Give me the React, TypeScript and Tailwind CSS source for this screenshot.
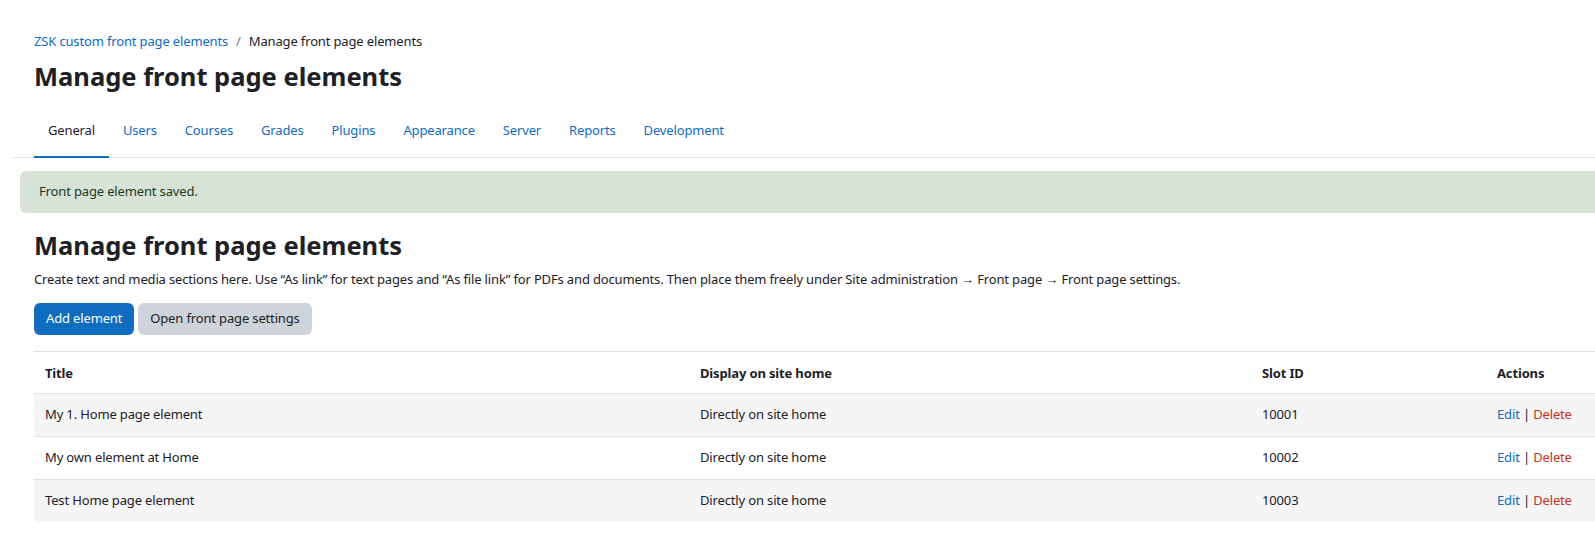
import React from 'react';

const tabs = ['General', 'Users', 'Courses', 'Grades', 'Plugins', 'Appearance', 'Server', 'Reports', 'Development'];

const rows = [
  { title: 'My 1. Home page element', display: 'Directly on site home', slot: '10001' },
  { title: 'My own element at Home', display: 'Directly on site home', slot: '10002' },
  { title: 'Test Home page element', display: 'Directly on site home', slot: '10003' },
];

const cols = 'grid grid-cols-[655px_562px_235px_1fr]';

export default function App() {
  return (
    <div className="h-[559px] w-full overflow-hidden bg-white text-[#1d2125] font-['Noto_Sans',sans-serif] text-[13px] tracking-[-0.15px]">
      <div className="w-[1640px]">
        <nav className="pl-[34px] pt-[31px] flex items-center leading-[20px]">
          <a className="text-[#0f6cbf]">ZSK custom front page elements</a>
          <span className="px-[8px] text-[#6a737b]">/</span>
          <span>Manage front page elements</span>
        </nav>
        <h1 className="pl-[34px] mt-[8px] text-[25.5px] font-bold leading-[34px] tracking-normal">Manage front page elements</h1>

        <div className="ml-[13px] mt-[17px] border-b border-[#dee2e6] pl-[21px] flex">
          {tabs.map((t, i) => (
            <div
              key={t}
              className={
                i === 0
                  ? 'px-[14px] pt-[10px] pb-[15px] leading-[20px] border-b-2 border-[#0f6cbf] -mb-px text-[#1d2125]'
                  : 'px-[14px] pt-[10px] pb-[17px] leading-[20px] text-[#0f6cbf]'
              }
            >
              {t}
            </div>
          ))}
        </div>

        <div className="ml-[20px] mt-[13px] h-[42px] rounded-[6px] bg-[#d8e3d7] pl-[19px] flex items-center text-[#1c3a1a]">
          Front page element saved.
        </div>

        <div className="pl-[34px]">
          <h2 className="mt-[16px] text-[25.5px] font-bold leading-[32px] tracking-normal">Manage front page elements</h2>
          <p className="mt-[8px] leading-[20px]">
            Create text and media sections here. Use “As link” for text pages and “As file link” for PDFs and documents. Then place them freely under Site administration → Front page → Front page settings.
          </p>
          <div className="mt-[14px] flex gap-[4px]">
            <button className="h-[32px] px-[12px] rounded-[6px] bg-[#0f6cbf] text-white">Add element</button>
            <button className="h-[32px] px-[12px] rounded-[6px] bg-[#ced4da] text-[#1d2125]">Open front page settings</button>
          </div>

          <div className="mt-[16px] border-t border-[#dee2e6]">
            <div className={`${cols} h-[42px] pt-[3px] items-center font-bold border-b border-[#dee2e6]`}>
              <div className="pl-[11px]">Title</div>
              <div className="pl-[11px]">Display on site home</div>
              <div className="pl-[11px]">Slot ID</div>
              <div className="pl-[11px]">Actions</div>
            </div>
            {rows.map((r, i) => (
              <div
                key={r.slot}
                className={`${cols} items-center ${i % 2 === 0 ? 'bg-[#f5f5f5]' : 'bg-white'} ${i < rows.length - 1 ? 'h-[43px] border-b border-[#dee2e6]' : 'h-[42px]'}`}
              >
                <div className="pl-[11px]">{r.title}</div>
                <div className="pl-[11px]">{r.display}</div>
                <div className="pl-[11px]">{r.slot}</div>
                <div className="pl-[11px]">
                  <a className="text-[#0f6cbf]">Edit</a> | <a className="text-[#ca3120]">Delete</a>
                </div>
              </div>
            ))}
          </div>
        </div>
      </div>
    </div>
  );
}
